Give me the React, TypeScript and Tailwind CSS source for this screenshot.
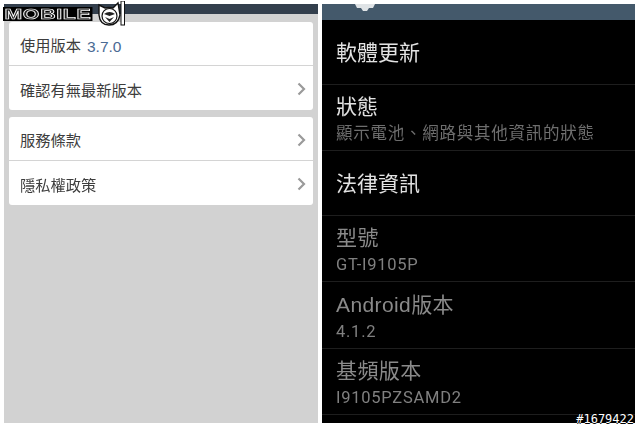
const cjk = "font-['Liberation_Sans','Noto_Sans_CJK_TC',sans-serif]";

function Chevron() {
  return (
    <svg width="9" height="14" viewBox="0 0 9 14" fill="none" className="shrink-0">
      <path d="M1.5 1.5 L7 7 L1.5 12.5" stroke="#9a9a9a" strokeWidth="2.2" />
    </svg>
  );
}

function Row({ label, value, chevron }: { label: string; value?: string; chevron?: boolean }) {
  return (
    <div className="flex h-[44px] items-center justify-between pl-[11px] pr-[7px] pt-[2px]">
      <div className="flex items-center gap-[6px] pt-[4px] text-[15.25px] text-[#3d3d3d]">
        <span>{label}</span>
        {value && <span className="text-[15.5px] text-[#4a6a94]">{value}</span>}
      </div>
      {chevron && <Chevron />}
    </div>
  );
}

function SettingRow({ title, sub, dim, h }: { title: string; sub?: string; dim?: boolean; h: string }) {
  return (
    <div className={`flex flex-col justify-center border-b border-[#1e1e1e] pl-[14px] ${sub ? 'pt-[4px]' : ''} ${h}`}>
      <div className={`text-[21px] leading-[27px] ${sub ? 'mb-[2px]' : ''} ${dim ? 'text-[#8a8a8a] tracking-[0.4px]' : 'text-[#e2e2e2]'}`}>{title}</div>
      {sub && (
        <div className={`font-['Roboto','Noto_Sans_CJK_TC',sans-serif] text-[16.5px] leading-[24px] tracking-[0.75px] ${dim ? 'text-[#808080]' : 'text-[#6e6e6e]'}`}>
          {sub}
        </div>
      )}
    </div>
  );
}

export default function App() {
  return (
    <div className={`relative flex h-[427px] w-[640px] gap-[4px] overflow-hidden bg-white pb-[4px] pl-[4px] pr-[5px] pt-[4px] ${cjk}`}>
      {/* left screenshot */}
      <div className="flex w-[314px] flex-col bg-[#d2d2d2]">
        <div className="h-[10px] bg-[#333f4d]" />
        <div className="flex flex-col gap-[7px] px-[5px] pt-[8px] blur-[0.4px]">
          <div className="divide-y divide-[#d4d4d4] rounded-[3px] bg-white">
            <Row label="使用版本" value="3.7.0" />
            <Row label="確認有無最新版本" chevron />
          </div>
          <div className="divide-y divide-[#d4d4d4] rounded-[3px] bg-white">
            <Row label="服務條款" chevron />
            <Row label="隱私權政策" chevron />
          </div>
        </div>
      </div>

      {/* right screenshot */}
      <div className="flex w-[313px] flex-col bg-black">
        <div className="flex h-[16px] items-start overflow-hidden bg-[#44596b] pl-[32px]">
          <svg width="22" height="7" viewBox="0 0 22 7">
            <path d="M1 0 L3 4 L7 4 L9 7 L13 7 L15 4 L19 4 L21 0 Z" fill="#dfe3e6" />
          </svg>
        </div>
        <div className="flex flex-col blur-[0.4px]">
          <SettingRow title="軟體更新" h="h-[65px]" />
          <SettingRow title="狀態" sub="顯示電池、網路與其他資訊的狀態" h="h-[66px]" />
          <SettingRow title="法律資訊" h="h-[65px]" />
          <SettingRow title="型號" sub="GT-I9105P" dim h="h-[66px]" />
          <SettingRow title="Android版本" sub="4.1.2" dim h="h-[67px]" />
          <SettingRow title="基頻版本" sub="I9105PZSAMD2" dim h="h-[66px]" />
        </div>
      </div>

      {/* logo watermark */}
      <div className="absolute left-[3px] top-[1px] flex items-center">
        <div className="w-[95px]">
          <span className="inline-block origin-left scale-x-[1.42] bg-black px-[1px] font-['Liberation_Sans',sans-serif] text-[15px] font-bold leading-[14px] tracking-[0.5px] text-[#222] [-webkit-text-stroke:0.7px_#fff]">
            MOBILE
          </span>
        </div>
        <svg width="28" height="26" viewBox="0 0 28 26">
          <path d="M1 4 L7 7 Q11 6 15 7 L20 2 L22 14 Q20 24 11 24 Q2 24 1 14 Z" fill="white" stroke="#111" strokeWidth="1.4" />
          <circle cx="11.5" cy="15" r="7.5" fill="none" stroke="#111" strokeWidth="1.2" />
          <path d="M6 13 Q11.5 9 17 13 L11.5 15 Z" fill="#222" />
          <path d="M7 16 L11.5 21 L16 16 L11.5 18 Z" fill="#222" />
          <rect x="23" y="0" width="3.5" height="24" fill="white" stroke="#111" strokeWidth="1" />
        </svg>
      </div>

      {/* post id */}
      <div className="absolute bottom-[1px] right-[6px] font-['DejaVu_Sans_Mono',monospace] text-[12px] leading-[14px] text-white [text-shadow:1px_0_0_#000,-1px_0_0_#000,0_1px_0_#000,0_-1px_0_#000]">
        #1679422
      </div>
    </div>
  );
}
